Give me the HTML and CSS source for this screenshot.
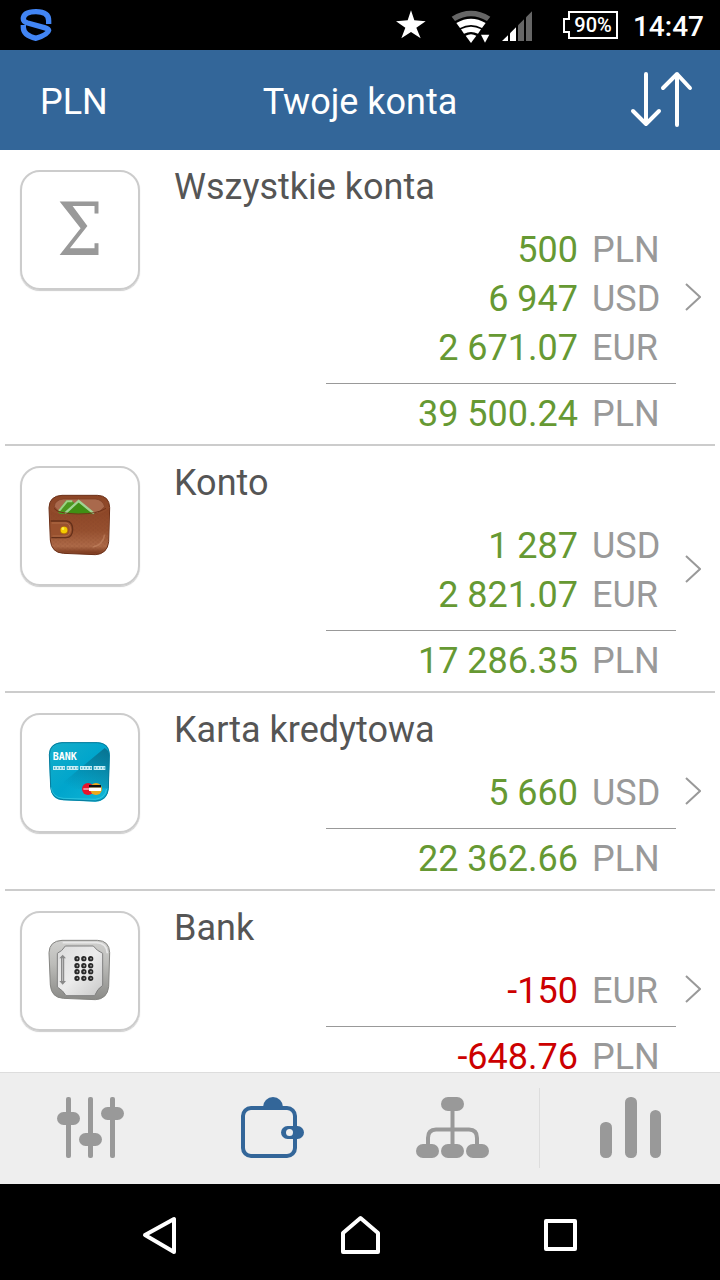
FILE: index.html
```html
<!DOCTYPE html>
<html lang="pl">

<head>
    <meta charset="UTF-8">
    <meta name="viewport" content="width=device-width, initial-scale=1.0">
    <title>Twoje konta</title>
    <link rel="stylesheet" href="styles.css">
</head>

<body>
    <!-- Pasek stanu -->
    <div class="status">
        <svg class="logo" width="32" height="34" viewBox="61 24 96 102" fill="none" stroke="#4285f4" stroke-width="16">
            <path d="M147 72V62Q147 35 109 35Q71 35 71 57Q71 65 84 69L134 83Q147 87 147 91Q145 103 109 115Q71 107 71 82V75" stroke-linejoin="round" />
        </svg>
        <svg class="star" width="32" height="32" viewBox="45 27 96 96" fill="#fff">
            <path d="M93 31L103 61L137 64L109 83L122 115L93 96L64 115L76 83L48 64L83 61Z" />
        </svg>
        <svg class="wifi" width="40" height="36" viewBox="213 21 120 108">
            <path d="M215 50Q273 15 331 50L321 63Q273 35 225 63Z" fill="#666" />
            <path d="M229 69Q273 43 317 69L306 84Q273 66 240 84Z" fill="#fff" />
            <path d="M243 88Q273 72 303 88L294 101Q273 91 252 101Z" fill="#fff" />
            <path d="M257 107Q273 98 289 107L273 129Z" fill="#fff" />
            <path d="M303 104H328L315 128Z" fill="#fff" />
        </svg>
        <svg class="signal" width="31" height="32" viewBox="366 27 93 96">
            <path d="M366 123L384 106V123Z" fill="#fff" />
            <path d="M390 100L408 82V123H390Z" fill="#fff" />
            <path d="M414 76L432 58V123H414Z" fill="#666" />
            <path d="M438 52L456 34V123H438Z" fill="#666" />
        </svg>
        <svg class="battery" width="55" height="28" viewBox="0 0 55 28">
            <path d="M6 1H54V27H6V21H1V8H6Z" fill="none" stroke="#fff" stroke-width="2" />
            <text x="30" y="21" text-anchor="middle" class="battery-text">90%</text>
        </svg>
        <span class="clock">14:47</span>
    </div>

    <!-- Nagłówek -->
    <header class="topbar">
        <button class="currency-button" type="button">PLN</button>
        <h1>Twoje konta</h1>
        <button class="sort-button" type="button" aria-label="Sortuj">
            <svg width="64" height="64" viewBox="0 0 64 64" fill="none" stroke="#fff" stroke-width="4" stroke-linecap="round" stroke-linejoin="round">
                <path d="M16 4V54M3 41L16 54L29 41" />
                <path d="M47 55V4M33 18L47 4L60 18" />
            </svg>
        </button>
    </header>

    <!-- Lista kont -->
    <main class="accounts">
        <a class="account" href="#wszystkie">
            <span class="tile sigma">Σ</span>
            <div class="info">
                <h2>Wszystkie konta</h2>
                <table>
                    <tbody>
                        <tr><td class="plus">500</td><th>PLN</th></tr>
                        <tr><td class="plus">6 947</td><th>USD</th></tr>
                        <tr><td class="plus">2 671.07</td><th>EUR</th></tr>
                    </tbody>
                    <tfoot>
                        <tr><td class="plus">39 500.24</td><th>PLN</th></tr>
                    </tfoot>
                </table>
            </div>
            <svg class="chevron" width="16" height="28" viewBox="0 0 16 28"><path d="M1 1L15 14L1 27" /></svg>
        </a>

        <a class="account" href="#konto">
            <span class="tile">
                <svg viewBox="36 39 348 348">
                    <defs>
                        <linearGradient id="leather" x1="0" y1="0" x2="0" y2="1">
                            <stop offset="0" stop-color="#8c4526" />
                            <stop offset="0.5" stop-color="#96502f" />
                            <stop offset="0.85" stop-color="#ad6a48" />
                            <stop offset="1" stop-color="#7c3a1e" />
                        </linearGradient>
                        <pattern id="grain" width="14" height="12" patternUnits="userSpaceOnUse">
                            <path d="M2 3h5M9 9h5" stroke="#7a3b20" stroke-width="2" opacity="0.4" />
                        </pattern>
                    </defs>
                    <path d="M156 121H262Q298 122 299 158L296 260Q292 297 256 299L160 295Q124 293 121 255L117 158Q118 123 156 121Z" fill="url(#leather)" stroke="#6c3018" stroke-width="3" />
                    <path d="M133 155Q134 135 160 132H256Q278 134 284 155L264 174H150Z" fill="#a9694c" stroke="#7b3d23" stroke-width="2" />
                    <path d="M143 170L168 137L186 138L200 150L180 177H150Z" fill="#4b971f" />
                    <path d="M147 168L171 139H187" fill="none" stroke="#9bd184" stroke-width="6" />
                    <path d="M163 178L206 137L254 178Z" fill="#3f8f14" />
                    <path d="M165 175L206 138L252 176" fill="none" stroke="#a0d493" stroke-width="7" />
                    <path d="M121 164Q128 174 148 177Q205 180 264 177Q286 173 297 160L294 258Q291 291 256 294L160 290Q128 288 124 254Z" fill="url(#leather)" />
                    <path d="M121 164Q128 174 148 177Q205 180 264 177Q286 173 297 160L294 258Q291 291 256 294L160 290Q128 288 124 254Z" fill="url(#grain)" />
                    <path d="M132 160Q142 176 205 177Q262 177 288 160" fill="none" stroke="#713219" stroke-width="3" />
                    <path d="M248 276Q278 272 284 239" fill="none" stroke="#ca8d6c" stroke-width="5" opacity="0.5" />
                    <path d="M122 198H169Q188 200 188 224Q187 247 168 248H124" fill="#99512f" stroke="#65301a" stroke-width="4" />
                    <path d="M125 204H168Q181 206 181 224Q180 242 165 243H127" fill="none" stroke="#bb7853" stroke-width="2" />
                    <circle cx="162" cy="226" r="12" fill="#b77108" />
                    <circle cx="162" cy="225" r="10" fill="#f3cb00" />
                    <circle cx="159" cy="221" r="4" fill="#ffed4a" />
                </svg>
            </span>
            <div class="info">
                <h2>Konto</h2>
                <table>
                    <tbody>
                        <tr><td class="plus">1 287</td><th>USD</th></tr>
                        <tr><td class="plus">2 821.07</td><th>EUR</th></tr>
                    </tbody>
                    <tfoot>
                        <tr><td class="plus">17 286.35</td><th>PLN</th></tr>
                    </tfoot>
                </table>
            </div>
            <svg class="chevron" width="16" height="28" viewBox="0 0 16 28"><path d="M1 1L15 14L1 27" /></svg>
        </a>

        <a class="account" href="#karta">
            <span class="tile">
                <svg viewBox="36 36 348 348">
                    <defs>
                        <linearGradient id="card" x1="0" y1="0" x2="1" y2="1">
                            <stop offset="0" stop-color="#16aeca" />
                            <stop offset="0.5" stop-color="#00a5cc" />
                            <stop offset="1" stop-color="#12b6d6" />
                        </linearGradient>
                        <linearGradient id="shade" x1="1" y1="0" x2="0.3" y2="1">
                            <stop offset="0" stop-color="#08718f" />
                            <stop offset="1" stop-color="#08718f" stop-opacity="0" />
                        </linearGradient>
                    </defs>
                    <path d="M156 118H262Q298 119 299 155L296 257Q292 294 256 296L160 292Q124 290 121 252L117 155Q118 120 156 118Z" fill="url(#card)" />
                    <path d="M284 135L143 252Q180 262 296 256L298 156Q297 143 284 135Z" fill="url(#shade)" />
                    <path d="M156 119H262Q297 120 298 155L295 257Q291 292 256 294L160 290Q125 288 122 252L118 155Q119 121 156 119Z" fill="none" stroke="#087c9c" stroke-width="3" />
                    <path d="M123 253Q128 284 160 286L256 289Q284 286 290 258" fill="none" stroke="#45d2e6" stroke-width="3" opacity="0.6" />
                    <text x="128" y="171" class="card-text">BANK</text>
                    <path d="M129 195H165M170 195H205M210 195H246M251 195H286" stroke="#c8edf4" stroke-width="12" />
                    <path d="M132 195H163M173 195H203M213 195H244M254 195H284" stroke="#2c9fba" stroke-width="5" stroke-dasharray="4 5" />
                    <circle cx="234" cy="258" r="18" fill="#e8132b" />
                    <circle cx="258" cy="258" r="18" fill="#eca91c" />
                    <path d="M237 246H273V254H237Z" fill="#111" />
                    <path d="M237 254H273V264H237Z" fill="#fff" />
                    <path d="M220 258H237" stroke="#fff" stroke-width="3" />
                </svg>
            </span>
            <div class="info">
                <h2>Karta kredytowa</h2>
                <table>
                    <tbody>
                        <tr><td class="plus">5 660</td><th>USD</th></tr>
                    </tbody>
                    <tfoot>
                        <tr><td class="plus">22 362.66</td><th>PLN</th></tr>
                    </tfoot>
                </table>
            </div>
            <svg class="chevron" width="16" height="28" viewBox="0 0 16 28"><path d="M1 1L15 14L1 27" /></svg>
        </a>

        <a class="account" href="#bank">
            <span class="tile">
                <svg viewBox="36 39 348 348">
                    <defs>
                        <linearGradient id="steel" x1="0" y1="0" x2="0" y2="1">
                            <stop offset="0" stop-color="#d0d0ce" />
                            <stop offset="0.4" stop-color="#bcbcb9" />
                            <stop offset="1" stop-color="#8a8a87" />
                        </linearGradient>
                        <linearGradient id="door" x1="0" y1="0" x2="1" y2="1">
                            <stop offset="0" stop-color="#dcdcdc" />
                            <stop offset="0.5" stop-color="#ececec" />
                            <stop offset="1" stop-color="#c8c8c8" />
                        </linearGradient>
                    </defs>
                    <path d="M156 121H262Q298 122 299 158L296 260Q292 297 256 299L160 295Q124 293 121 255L117 158Q118 123 156 121Z" fill="url(#steel)" stroke="#858582" stroke-width="3" />
                    <path d="M158 128H260Q291 130 292 160" fill="none" stroke="#e8e8e8" stroke-width="5" />
                    <path d="M166 138H250Q260 152 278 160V256Q262 266 254 287H168Q160 272 142 261V160Q156 154 166 138Z" fill="url(#door)" stroke="#808080" stroke-width="3" stroke-linejoin="round" />
                    <path d="M158 170V248" stroke="#777" stroke-width="9" />
                    <path d="M158 170V248" stroke="#bbb" stroke-width="4" />
                    <path d="M148 175L158 164L168 175ZM148 243L158 254L168 243Z" fill="#898989" />
                    <g stroke="#282828" stroke-width="16" stroke-linecap="round" stroke-dasharray="0 20.5">
                        <path d="M201 176H243M201 197H243M201 215H243M201 235H243" />
                    </g>
                    <g stroke="#aaa" stroke-width="5" stroke-linecap="round" stroke-dasharray="0 20.5">
                        <path d="M202 176H244M202 197H244M202 215H244M202 235H244" />
                    </g>
                </svg>
            </span>
            <div class="info">
                <h2>Bank</h2>
                <table>
                    <tbody>
                        <tr><td class="minus">-150</td><th>EUR</th></tr>
                    </tbody>
                    <tfoot>
                        <tr><td class="minus">-648.76</td><th>PLN</th></tr>
                    </tfoot>
                </table>
            </div>
            <svg class="chevron" width="16" height="28" viewBox="0 0 16 28"><path d="M1 1L15 14L1 27" /></svg>
        </a>
    </main>

    <!-- Zakładki -->
    <nav class="tabs">
        <a href="#ustawienia" aria-label="Ustawienia">
            <svg width="80" height="64" viewBox="0 0 80 64" fill="#999">
                <rect x="16" y="1" width="5" height="61" rx="2" />
                <rect x="38" y="1" width="5" height="61" rx="2" />
                <rect x="60" y="1" width="5" height="61" rx="2" />
                <rect x="7" y="16" width="23" height="13" rx="6.5" />
                <rect x="29" y="37" width="23" height="13" rx="6.5" />
                <rect x="51" y="11" width="23" height="13" rx="6.5" />
            </svg>
        </a>
        <a href="#konta" aria-label="Konta">
            <svg width="80" height="64" viewBox="0 0 80 64" fill="#369">
                <rect x="13" y="12" width="52" height="48" rx="8" fill="none" stroke="#369" stroke-width="4" />
                <path d="M33 11a10 10 0 0 1 20 0z" />
                <rect x="51" y="30" width="23" height="13" rx="6.5" />
                <circle cx="59.5" cy="36.5" r="3.5" fill="#eee" />
            </svg>
        </a>
        <a href="#kategorie" aria-label="Kategorie">
            <svg width="80" height="64" viewBox="0 0 80 64" fill="#999">
                <rect x="31" y="1" width="23" height="14" rx="7" />
                <path d="M42.5 10V52M18 50V42Q18 33.5 26 33.5H59Q67 33.5 67 42V50" fill="none" stroke="#999" stroke-width="4" />
                <rect x="6" y="48" width="23" height="14" rx="7" />
                <rect x="31" y="48" width="23" height="14" rx="7" />
                <rect x="56" y="48" width="23" height="14" rx="7" />
            </svg>
        </a>
        <a href="#raporty" aria-label="Raporty">
            <svg width="80" height="64" viewBox="0 0 80 64" fill="#999">
                <rect x="10" y="26" width="12" height="36" rx="5.5" />
                <rect x="35" y="1" width="12" height="61" rx="5.5" />
                <rect x="60" y="14" width="11" height="48" rx="5.5" />
            </svg>
        </a>
    </nav>

    <!-- Przyciski systemowe -->
    <div class="system">
        <button type="button" aria-label="Wstecz">
            <svg width="48" height="48" viewBox="0 0 48 48"><path d="M9 27L38 11V44Z" /></svg>
        </button>
        <button type="button" aria-label="Ekran główny">
            <svg width="48" height="48" viewBox="0 0 48 48"><path d="M7 44V25L24.5 10L42 25V44Z" /></svg>
        </button>
        <button type="button" aria-label="Ostatnie">
            <svg width="48" height="48" viewBox="0 0 48 48"><path d="M10 13H39V41H10Z" /></svg>
        </button>
    </div>
</body>

</html>
```
FILE: styles.css
```css
/* Ogólne */

* {
    box-sizing: border-box;
}

body {
    display: flex;
    flex-direction: column;
    height: 100vh;
    margin: 0;
    font-family: Roboto, sans-serif;
    font-size: 36px;
    background-color: #fff;
}

svg {
    display: block;
    flex: none;
}

button {
    margin: 0;
    padding: 0;
    border: none;
    background: none;
    font: inherit;
    color: inherit;
    cursor: pointer;
}

a {
    color: inherit;
    text-decoration: none;
}

/* Pasek stanu */

.status {
    display: flex;
    flex: none;
    align-items: center;
    height: 50px;
    padding: 0 16px 0 20px;
    background-color: #000;
    color: #fff;
}

.star {
    margin-left: auto;
}

.wifi {
    margin-left: 24px;
}

.signal {
    margin-left: 11px;
}

.battery {
    margin: 0 15px 0 30px;
}

.battery-text {
    font-size: 20px;
    font-weight: 500;
    fill: #fff;
}

.clock {
    padding-top: 2px;
    font-size: 28px;
    font-weight: 500;
}

/* Nagłówek */

.topbar {
    display: grid;
    flex: none;
    grid-template-columns: 1fr auto 1fr;
    align-items: center;
    height: 100px;
    padding: 4px 26px 0;
    background-color: #369;
    color: #fff;
}

.topbar h1 {
    margin: 0;
    font-size: 36px;
    font-weight: 400;
}

.currency-button {
    justify-self: start;
    padding-left: 14px;
}

.sort-button {
    justify-self: end;
}

/* Lista kont */

.accounts {
    flex: 1;
    min-height: 0;
    padding: 0 5px;
    overflow-y: auto;
    scrollbar-width: none;
}

.account {
    display: flex;
    align-items: center;
    padding: 5px 14px 5px 15px;
    border-bottom: 2px solid #ccc;
}

.tile {
    display: flex;
    flex: none;
    align-self: flex-start;
    align-items: center;
    justify-content: center;
    width: 120px;
    height: 120px;
    margin: 15px 34px 0 0;
    border: 2px solid #ccc;
    border-radius: 20px;
    box-shadow: 0 1px 1px #ccc;
}

.tile svg {
    width: 116px;
    height: 116px;
}

.sigma {
    font-family: "DejaVu Serif Condensed", "Liberation Serif", serif;
    font-size: 72px;
    line-height: 116px;
    color: #999;
}

.card-text {
    font-family: "DejaVu Sans Mono", monospace;
    font-size: 30px;
    font-weight: 700;
    fill: #fff;
}

.info {
    flex: 1;
    padding-top: 8px;
    line-height: 49px;
}

.info h2 {
    margin: 0 0 14px;
    font-size: 36px;
    font-weight: 400;
    color: #555;
}

.info table {
    width: 350px;
    margin-left: auto;
    border-spacing: 0;
}

.info td,
.info th {
    padding: 0;
    font-weight: 400;
}

.info td {
    padding-right: 12px;
    text-align: right;
}

.info th {
    width: 86px;
    padding-left: 2px;
    text-align: left;
    color: #999;
}

.info tbody tr:last-child > * {
    padding-bottom: 10px;
}

.info tfoot tr > * {
    padding-top: 6px;
    border-top: 1px solid #999;
}

.info .plus {
    color: #693;
}

.info .minus {
    color: #c00;
}

.chevron {
    margin-left: 9px;
    fill: none;
    stroke: #999;
    stroke-width: 2;
}

/* Zakładki */

.tabs {
    display: grid;
    flex: none;
    grid-template-columns: repeat(4, 1fr);
    align-items: center;
    height: 112px;
    padding-bottom: 2px;
    border-top: 1px solid #ddd;
    background-color: #eee;
}

.tabs a {
    display: flex;
    align-items: center;
    justify-content: center;
    height: 80px;
}

.tabs a:nth-child(3) {
    border-right: 1px solid #ddd;
}

/* Przyciski systemowe */

.system {
    display: grid;
    flex: none;
    grid-template-columns: repeat(3, 1fr);
    justify-items: center;
    align-items: center;
    height: 96px;
    padding: 0 60px;
    background-color: #000;
}

.system svg {
    fill: none;
    stroke: #fff;
    stroke-width: 4;
    stroke-linejoin: round;
}
```
